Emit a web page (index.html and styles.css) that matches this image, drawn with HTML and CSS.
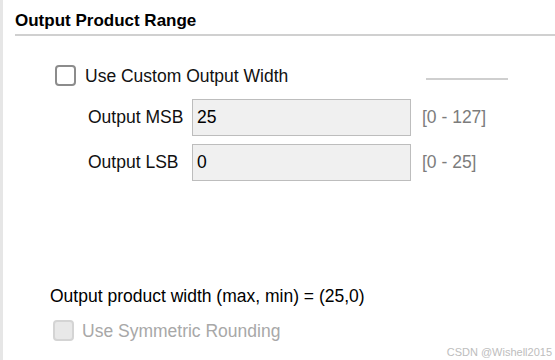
FILE: index.html
```html
<!DOCTYPE html>
<html lang="en">
<head>
  <meta charset="UTF-8" />
  <title>Output Product Range</title>
  <link rel="stylesheet" href="styles.css">
</head>
<body>

<div class="panel">
  <h2 class="title">Output Product Range</h2>
  <div class="rule"></div>

  <div class="check-row">
    <span class="box"></span>
    <span class="check-label">Use Custom Output Width</span>
    <span class="stub"></span>
  </div>

  <div class="fields">
    <div class="field">
      <span class="field-label">Output MSB</span>
      <div class="input">25</div>
      <span class="range">[0 - 127]</span>
    </div>
    <div class="field">
      <span class="field-label">Output LSB</span>
      <div class="input">0</div>
      <span class="range">[0 - 25]</span>
    </div>
  </div>

  <p class="summary">Output product width (max, min) = (25,0)</p>

  <div class="check-row disabled">
    <span class="box"></span>
    <span class="check-label">Use Symmetric Rounding</span>
  </div>

  <span class="watermark">CSDN @Wishell2015</span>
</div>

</body>
</html>
```

FILE: styles.css
```css
body, html {
  margin: 0;
  padding: 0;
  font-family: "Liberation Sans", Arial, sans-serif;
  background: #fff;
  color: #111;
}

.panel {
  position: relative;
  height: 360px;
  border-left: 3px solid #e6e6e6;
  box-sizing: border-box;
  overflow: hidden;
}

.title {
  margin: 11px 0 0 12px;
  font-size: 17px;
  line-height: 20px;
  font-weight: bold;
  color: #000;
}

.rule {
  margin: 3px 0 0 12px;
  height: 2px;
  background: #d0d0d0;
}

.check-row {
  display: flex;
  align-items: center;
  width: 453px;
  margin: 29px 0 0 52px;
  font-size: 17.5px;
  line-height: 20px;
}

.box {
  width: 17px;
  height: 17px;
  border: 2px solid #8c8c8c;
  border-radius: 4px;
  background: #fff;
  flex: none;
}

.check-label {
  margin-left: 9px;
}

.stub {
  align-self: flex-start;
  margin: 13px 0 0 auto;
  width: 82px;
  height: 2px;
  background: #cfcfcf;
}

.fields {
  display: flex;
  flex-direction: column;
  gap: 8px;
  margin: 13px 0 0 85px;
  font-size: 17.5px;
}

.field {
  display: flex;
  align-items: center;
}

.field-label {
  width: 104px;
}

.input {
  width: 205px;
  height: 35px;
  line-height: 35px;
  padding-left: 4px;
  padding-right: 8px;
  border: 1px solid #bdbdbd;
  background: #f0f0f0;
  color: #000;
}

.range {
  margin-left: 11px;
  color: #7c7c7c;
}

.summary {
  margin: 105px 0 0 47px;
  font-size: 17.5px;
  line-height: 20px;
  color: #000;
}

.check-row.disabled {
  margin: 14px 0 0 50px;
  color: #a8a8a8;
}

.disabled .box {
  border-color: #d4d4d4;
  background: #e8e8e8;
}

.disabled .check-label {
  margin-left: 8px;
}

.watermark {
  position: absolute;
  right: 3px;
  bottom: 1px;
  font-size: 11px;
  line-height: 13px;
  color: #bdbdbd;
}
```
